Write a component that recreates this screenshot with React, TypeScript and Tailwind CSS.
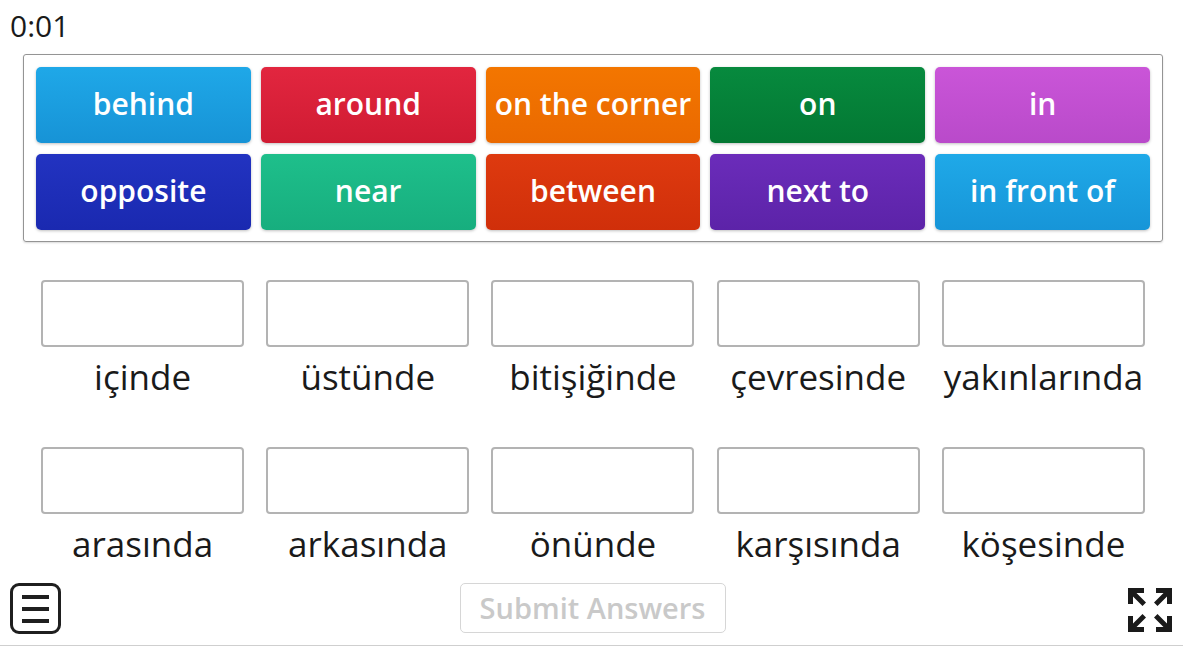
import React from 'react';

const font = { fontFamily: '"Open Sans", "Noto Sans", sans-serif' };

const tiles = [
  { label: 'behind', cls: 'from-[#1fa8e8] to-[#1793d6]' },
  { label: 'around', cls: 'from-[#e2263f] to-[#d01b33]' },
  { label: 'on the corner', cls: 'from-[#f37600] to-[#ea6900]' },
  { label: 'on', cls: 'from-[#078a3e] to-[#037833]' },
  { label: 'in', cls: 'from-[#ca55d8] to-[#b94aca]' },
  { label: 'opposite', cls: 'from-[#2233c1] to-[#1a29b0]' },
  { label: 'near', cls: 'from-[#1ebf8b] to-[#17ae7e]' },
  { label: 'between', cls: 'from-[#de3a0f] to-[#d02f0a]' },
  { label: 'next to', cls: 'from-[#6b2cba] to-[#5c23a8]' },
  { label: 'in front of', cls: 'from-[#1fa9e8] to-[#1795d8]' },
];

const targets = [
  ['içinde', 'üstünde', 'bitişiğinde', 'çevresinde', 'yakınlarında'],
  ['arasında', 'arkasında', 'önünde', 'karşısında', 'köşesinde'],
];

function FullscreenIcon() {
  return (
    <svg width="46" height="46" viewBox="0 0 46 46" fill="#1a1a1a">
      {/* top-left */}
      <polygon points="1,1 17,1 17,6 9.5,6 19,15.5 15.5,19 6,9.5 6,17 1,17" />
      {/* top-right */}
      <polygon points="45,1 29,1 29,6 36.5,6 27,15.5 30.5,19 40,9.5 40,17 45,17" />
      {/* bottom-left */}
      <polygon points="1,45 17,45 17,40 9.5,40 19,30.5 15.5,27 6,36.5 6,29 1,29" />
      {/* bottom-right */}
      <polygon points="45,45 29,45 29,40 36.5,40 27,30.5 30.5,27 40,36.5 40,29 45,29" />
    </svg>
  );
}

export default function App() {
  return (
    <div className="w-[1183px] h-[651px] bg-white flex flex-col text-[#1a1a1a]" style={font}>
      {/* Timer */}
      <div className="h-[54px] pl-[10px] pt-[6px] text-[30px] leading-[40px]">0:01</div>

      {/* Tile bank */}
      <div className="mx-[23px] w-[1140px] border border-[#949494] rounded-[3px] p-[12px] pb-[11px] grid grid-cols-5 gap-x-[10px] gap-y-[11px] shadow-[0_1px_2px_rgba(0,0,0,0.15)]">
        {tiles.map((t) => (
          <div
            key={t.label}
            className={`h-[76px] pb-[3px] rounded-[5px] bg-gradient-to-b ${t.cls} flex items-center justify-center text-white text-[30px] font-semibold shadow-[0_1px_3px_rgba(0,0,0,0.25)]`}
          >
            {t.label}
          </div>
        ))}
      </div>

      {/* Drop targets */}
      <div className="mx-[23px] w-[1140px] px-[12px] mt-[38px] flex flex-col gap-[40px]">
        {targets.map((row, i) => (
          <div key={i} className="grid grid-cols-5 gap-x-[10px]">
            {row.map((word) => (
              <div key={word} className="flex flex-col items-center">
                <div className="w-[203px] h-[67px] border-2 border-[#b3b3b3] rounded-[4px]" />
                <div className="text-[35px] leading-[60px] h-[60px] whitespace-nowrap">{word}</div>
              </div>
            ))}
          </div>
        ))}
      </div>

      {/* Bottom bar */}
      <div className="mt-auto h-[68px] border-b border-[#cfcfcf] mb-[5px] grid grid-cols-[1fr_auto_1fr] items-start px-[10px] pt-[5px]">
        <div className="w-[51px] h-[51px] border-[3px] border-[#1f1f1f] rounded-[9px] flex flex-col items-center justify-center gap-[8px]">
          <div className="w-[27px] h-[4px] bg-[#1f1f1f]" />
          <div className="w-[27px] h-[4px] bg-[#1f1f1f]" />
          <div className="w-[27px] h-[4px] bg-[#1f1f1f]" />
        </div>
        <div className="w-[266px] h-[50px] ml-[2px] border border-[#d6d6d6] rounded-[5px] flex items-center justify-center text-[29px] font-semibold text-[#c9c9c9]">
          Submit Answers
        </div>
        <div className="pt-[4px] flex justify-end">
          <FullscreenIcon />
        </div>
      </div>
    </div>
  );
}
